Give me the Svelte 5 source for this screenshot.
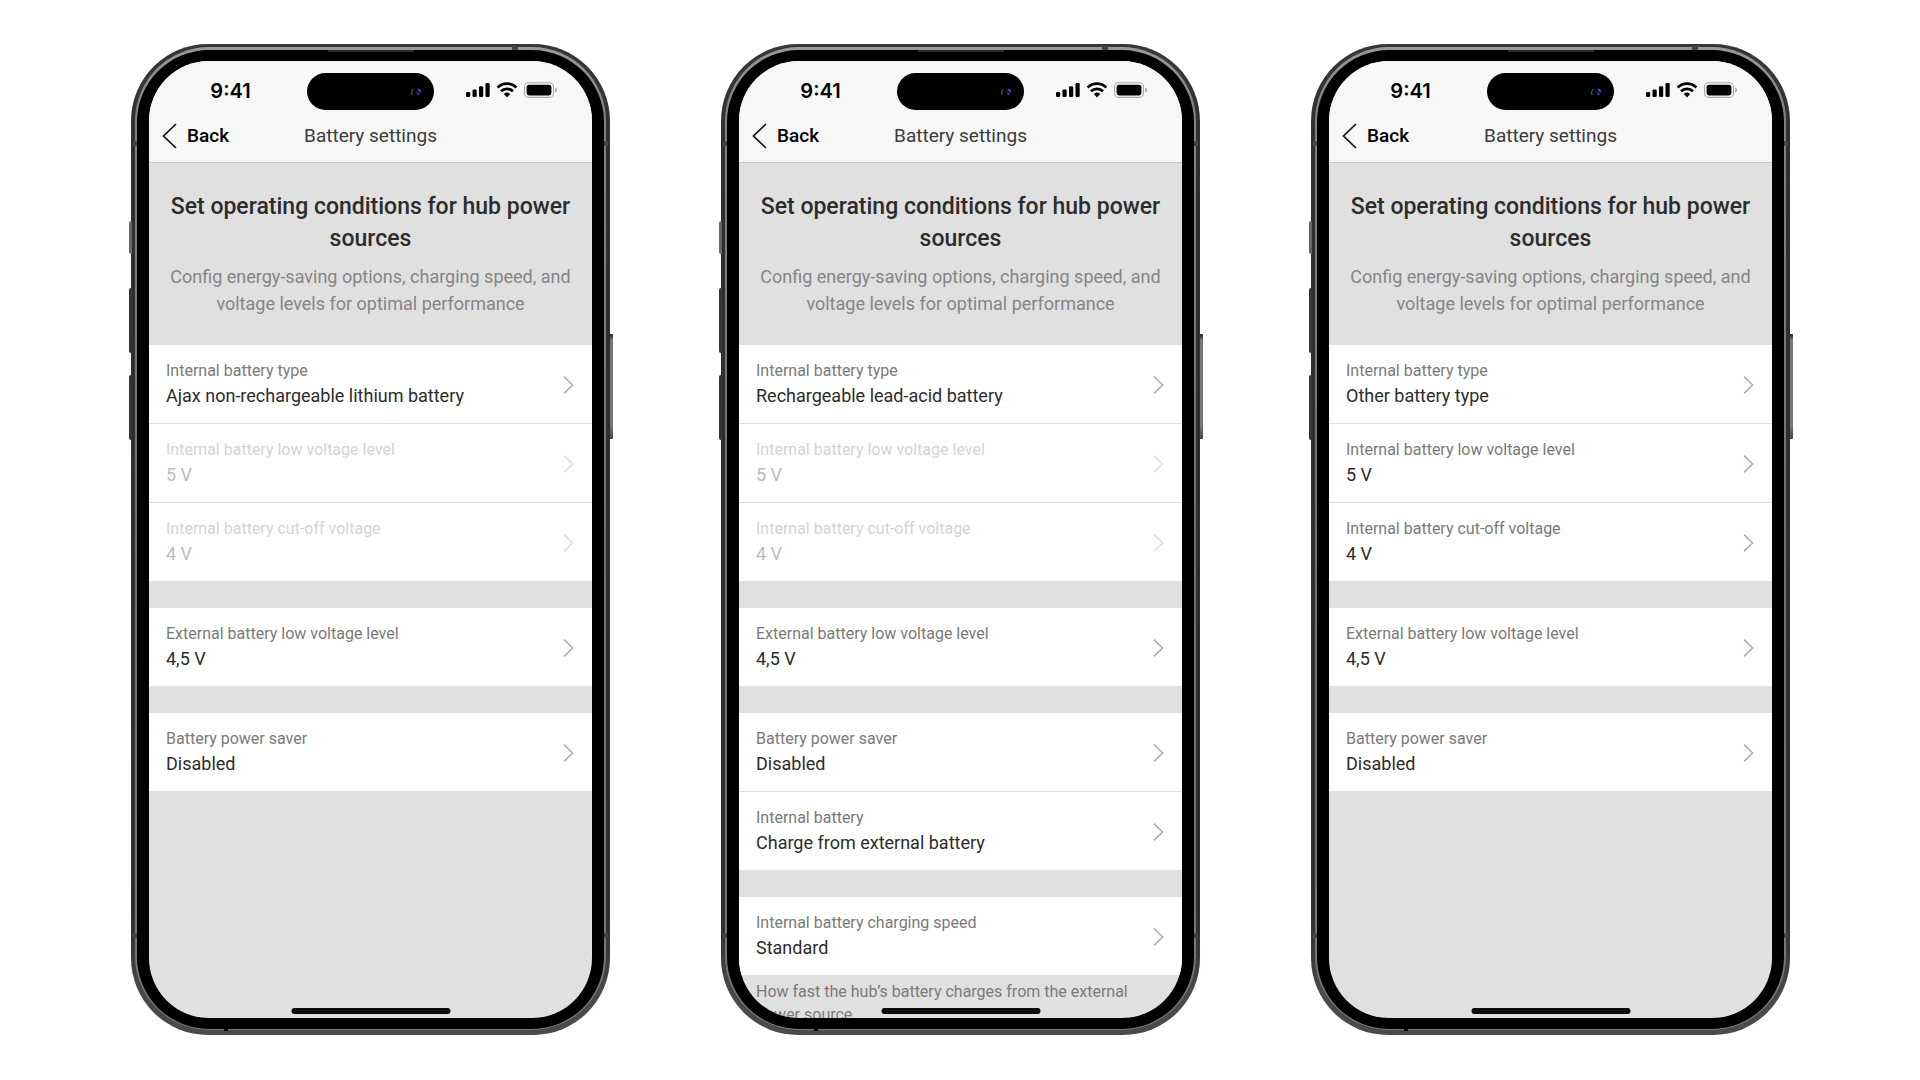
<script>
  const shared = [
    [{ label: 'External battery low voltage level', value: '4,5 V' }],
    [{ label: 'Battery power saver', value: 'Disabled' }],
  ];

  const internal = (type, locked) => [
    { label: 'Internal battery type', value: type },
    { label: 'Internal battery low voltage level', value: '5 V', locked },
    { label: 'Internal battery cut-off voltage', value: '4 V', locked },
  ];

  const phones = [
    { groups: [internal('Ajax non-rechargeable lithium battery', true), ...shared] },
    {
      groups: [
        internal('Rechargeable lead-acid battery', true),
        shared[0],
        [...shared[1], { label: 'Internal battery', value: 'Charge from external battery' }],
        [{ label: 'Internal battery charging speed', value: 'Standard' }],
      ],
      note: 'How fast the hub’s battery charges from the external power source',
    },
    { groups: [internal('Other battery type', false), ...shared] },
  ];
</script>

<main>
  {#each phones as phone}
    <article class="phone">
      <span class="key action"></span>
      <span class="key up"></span>
      <span class="key down"></span>
      <span class="key power"></span>
      <div class="rim">
        <span class="band top"></span>
        <span class="band left high"></span>
        <span class="band left low"></span>
        <span class="band right high"></span>
        <span class="band right low"></span>
        <span class="band bottom"></span>
        <div class="bezel">
          <span class="speaker"></span>
          <div class="screen">
            <header>
              <div class="status">
                <time>9:41</time>
                <div class="island">
                  <svg width="14" height="10" viewBox="0 0 14 10" aria-hidden="true">
                    <path d="M4.4 2.2Q1.4 4.6 3.2 8" fill="none" stroke="#14705a" stroke-width="1.3" />
                    <circle cx="9.6" cy="5" r="2.8" fill="#10104a" />
                    <path d="M9 2.4q2.4 0 2 2.4M8.4 6.8l1.8.4" fill="none" stroke="#5a60d8" stroke-width="1.3" />
                  </svg>
                </div>
                <svg class="signals" width="92" height="16" viewBox="0 0 92 16" aria-hidden="true">
                  <rect x="0" y="10" width="4.2" height="5" rx="1.2" />
                  <rect x="6.5" y="7.4" width="4.2" height="7.6" rx="1.2" />
                  <rect x="13" y="4.2" width="4.2" height="10.8" rx="1.2" />
                  <rect x="19.5" y="1" width="4.2" height="14" rx="1.2" />
                  <g fill="none" stroke="#000" stroke-width="2.7">
                    <path d="M31.6 5.5a13.4 13.4 0 0 1 18.8 0" />
                    <path d="M35 9.3a8.6 8.6 0 0 1 12 0" />
                  </g>
                  <path d="M41 15.4l-3.2-3.3a4.7 4.7 0 0 1 6.4 0z" />
                  <rect x="58.5" y=".8" width="29" height="14.6" rx="4" fill="none" stroke="#a8a8a8" stroke-width="1.1" />
                  <rect x="60.6" y="2.8" width="24.8" height="10.6" rx="2.4" />
                  <path d="M89.2 5.6q2 .8 2 2.5t-2 2.5z" fill="#a8a8a8" />
                </svg>
              </div>
              <nav>
                <button class="back">
                  <svg width="15" height="26" viewBox="0 0 15 26" aria-hidden="true">
                    <path d="M14 1L1.5 13 14 25" fill="none" stroke="#111" stroke-width="1.7" />
                  </svg>
                  Back
                </button>
                <h1>Battery settings</h1>
              </nav>
            </header>

            <div class="content">
              <section class="intro">
                <h2>Set operating conditions for hub power sources</h2>
                <p>Config energy-saving options, charging speed, and voltage levels for optimal performance</p>
              </section>
              <div class="groups">
                {#each phone.groups as group}
                  <div class="group">
                    {#each group as row}
                      <button class="row" disabled={row.locked}>
                        <span class="text">
                          <span class="label">{row.label}</span>
                          <span class="value">{row.value}</span>
                        </span>
                        <svg width="11" height="18" viewBox="0 0 11 18" aria-hidden="true">
                          <path d="M1 .6L9.6 9 1 17.4" fill="none" stroke="#adadad" stroke-width="1.5" />
                        </svg>
                      </button>
                    {/each}
                  </div>
                {/each}
              </div>
              {#if phone.note}
                <p class="note">{phone.note}</p>
              {/if}
            </div>
            <span class="home"></span>
          </div>
        </div>
      </div>
    </article>
  {/each}
</main>

<style>
  :global(body) {
    margin: 0;
    background: #fff;
  }

  main {
    display: flex;
    justify-content: center;
    gap: 111px;
    padding: 44px 0 44px 1px;
    font-family: Roboto, 'Liberation Sans', sans-serif;
    color: #2c2c2c;
  }

  h1, h2, p {
    margin: 0;
    font-weight: 400;
  }

  button {
    border: 0;
    padding: 0;
    background: none;
    font: inherit;
    color: inherit;
    text-align: left;
  }

  svg {
    flex: none;
    display: block;
  }

  .phone {
    position: relative;
    box-sizing: border-box;
    flex: 0 1 479px;
    padding: 3px 4px 5px;
    border-radius: 77px;
    background: linear-gradient(#373735, #2f2f2e 12%, #2f2f2e 88%, #4c4947 96%);
  }

  .key {
    position: absolute;
    left: -2px;
    width: 3px;
    border-radius: 2px 0 0 2px;
    background: #353535;
  }

  .action { top: 177px; height: 33px; background: #666; }
  .up { top: 244px; height: 65px; }
  .down { top: 331px; height: 65px; }

  .power {
    top: 290px;
    left: auto;
    right: -3px;
    height: 105px;
    border-radius: 0 1px 1px 0;
    background: linear-gradient(#222, #777 6%, #777 88%, #444);
  }

  .rim {
    position: relative;
    padding: 3px 2px 1px;
    border-radius: 74px;
    background: linear-gradient(#9a9a98, #85827e 6%, #72706d 50%, #7a7875);
  }

  .band {
    position: absolute;
    width: 4px;
    height: 5px;
    background: #454545;
  }

  .band.top { top: -1px; right: 88px; width: 6px; }
  .band.left { left: -2px; }
  .band.right { right: -2px; }
  .band.high { top: 94px; }
  .band.low { bottom: 92px; }
  .band.bottom { bottom: -1px; left: 89px; height: 2px; background: #000; }

  .bezel {
    position: relative;
    padding: 11px 12px;
    border-radius: 72px;
    background: #000;
  }

  .speaker {
    position: absolute;
    top: 0;
    left: 50%;
    width: 86px;
    height: 2px;
    margin-left: -43px;
    background: #2c2c2b;
  }

  .screen {
    position: relative;
    display: flex;
    flex-direction: column;
    aspect-ratio: 443 / 957;
    overflow: hidden;
    border-radius: 60px;
    background: #e0e0e0;
  }

  header {
    flex: none;
    border-bottom: 1px solid #c6c6c6;
    background: #f7f7f7;
  }

  .status {
    display: grid;
    grid-template-columns: 1fr 127px 1fr;
    align-items: center;
    padding-top: 12px;
  }

  time {
    padding: 0 26px 2px 31px;
    text-align: center;
    font: 600 20px/34px Inter, 'Liberation Sans', sans-serif;
    color: #000;
  }

  .island {
    display: flex;
    align-items: center;
    justify-content: flex-end;
    box-sizing: border-box;
    height: 37px;
    padding-right: 11px;
    border-radius: 19px;
    background: #000;
  }

  .signals {
    justify-self: start;
    margin: 0 0 4px 32px;
  }

  nav {
    display: grid;
    grid-template-columns: 1fr auto 1fr;
    align-items: center;
    padding: 0 13px;
    height: 52px;
  }

  .back {
    display: flex;
    align-items: center;
    gap: 10px;
    font-size: 19px;
    font-weight: 500;
    line-height: 26px;
    color: #000;
  }

  h1 {
    padding-bottom: 1px;
    font-size: 19px;
    line-height: 25px;
    color: #3b3b3b;
  }

  .content {
    flex: 1;
    min-height: 0;
    overflow: hidden;
  }

  .intro {
    padding: 28px 12px;
    text-align: center;
  }

  h2 {
    font-size: 23px;
    font-weight: 500;
    line-height: 32px;
  }

  .intro p {
    margin-top: 8px;
    font-size: 18px;
    line-height: 27px;
    color: #858585;
  }

  .groups {
    display: flex;
    flex-direction: column;
    gap: 27px;
  }

  .group {
    display: flex;
    flex-direction: column;
    gap: 1px;
    background: #dedede;
  }

  .row {
    display: flex;
    align-items: center;
    justify-content: space-between;
    padding: 15px 18px 14px 17px;
    background: #fff;
  }

  .text {
    display: flex;
    flex-direction: column;
  }

  .label {
    font-size: 16px;
    line-height: 22px;
    color: #7a7a7a;
  }

  .value {
    font-size: 18px;
    line-height: 27px;
  }

  .row:disabled .label { color: #d4d4d4; }
  .row:disabled .value { color: #bcbcbc; }
  .row:disabled svg { opacity: 0.4; }

  .note {
    padding: 5px 34px 0 17px;
    font-size: 16px;
    line-height: 23px;
    color: #7a7a7a;
  }

  .home {
    position: absolute;
    bottom: 4px;
    left: 50%;
    width: 159px;
    height: 6px;
    border-radius: 3px;
    background: #0c0c0c;
    transform: translateX(-50%);
  }
</style>
